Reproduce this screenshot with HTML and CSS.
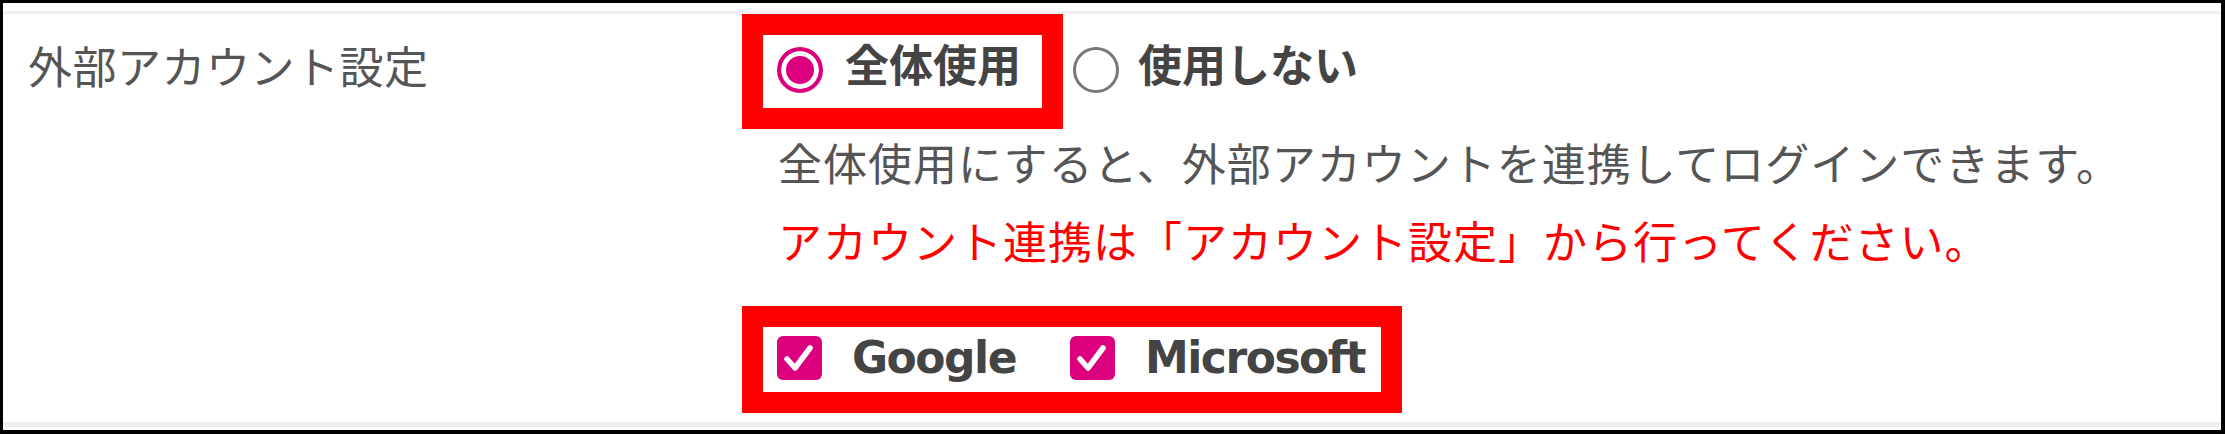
FILE: index.html
```html
<!DOCTYPE html>
<html lang="ja">
<head>
  <meta charset="UTF-8">
  <title>外部アカウント設定</title>
  <link rel="stylesheet" href="styles.css">
</head>
<body>
  <div class="frame">
    <div class="row">
      <div class="row-label">外部アカウント設定</div>
      <div class="row-body">
        <!-- 使用設定 -->
        <div class="radio-line">
          <div class="mark mark-radio">
            <label class="radio">
              <span class="radio-dot checked"></span>
              <span class="radio-text">全体使用</span>
            </label>
          </div>
          <label class="radio radio-off">
            <span class="radio-dot"></span>
            <span class="radio-text">使用しない</span>
          </label>
        </div>

        <p class="note">全体使用にすると、外部アカウントを連携してログインできます。</p>
        <p class="note warn">アカウント連携は「アカウント設定」から行ってください。</p>

        <!-- 連携先 -->
        <div class="mark mark-check">
          <label class="check">
            <span class="check-box">
              <svg viewBox="0 0 44 44" width="44" height="44"><polyline points="10,23 18,32 33,12" fill="none" stroke="#fff" stroke-width="5.5" stroke-linecap="round" stroke-linejoin="round"/></svg>
            </span>
            <span class="check-text">Google</span>
          </label>
          <label class="check">
            <span class="check-box">
              <svg viewBox="0 0 44 44" width="44" height="44"><polyline points="10,23 18,32 33,12" fill="none" stroke="#fff" stroke-width="5.5" stroke-linecap="round" stroke-linejoin="round"/></svg>
            </span>
            <span class="check-text">Microsoft</span>
          </label>
        </div>
      </div>
    </div>
  </div>
</body>
</html>
```

FILE: styles.css
```css
/* Reset */
* {
  margin: 0;
  padding: 0;
  box-sizing: border-box;
}

body {
  font-family: "Noto Sans CJK JP", sans-serif;
  background-color: #fff;
  color: #555;
}

.frame {
  width: 2225px;
  height: 434px;
  border: solid #000;
  border-width: 3px 4px 4px 3px;
  padding: 8px 0 3px;
}

.row {
  display: flex;
  height: 100%;
  border-top: 3px solid #eef0f4;
  border-bottom: 5px solid #eef0f4;
}

.row-label {
  flex-shrink: 0;
  width: 739px;
  padding: 21px 0 0 25px;
  font-size: 44px;
  line-height: 60px;
  letter-spacing: 0.5px;
  color: #555;
}

.row-body {
  display: flex;
  flex-direction: column;
  align-items: flex-start;
}

/* red frames */
.mark {
  border: 21px solid #f00;
}

.radio-line {
  display: flex;
  align-items: flex-start;
}

.mark-radio {
  padding: 5px 21px 15px 14px;
}

.radio {
  display: flex;
  align-items: flex-start;
  gap: 22px;
}

.radio-off {
  margin: 26px 0 0 10px;
  gap: 19px;
}

.radio-dot {
  width: 46px;
  height: 46px;
  margin-top: 7px;
  border-radius: 50%;
  border: 3px solid #777;
  background-color: #fff;
}

.radio-dot.checked {
  border: 4px solid #dc007f;
  background-color: #dc007f;
  box-shadow: inset 0 0 0 5px #fff;
}

.radio-text {
  font-size: 44px;
  line-height: 46px;
  font-weight: bold;
  color: #444;
}

.note {
  margin: 3px 0 0 36px;
  font-size: 44px;
  line-height: 60px;
  letter-spacing: 1px;
  color: #555;
}

.note.warn {
  margin-top: 18px;
  color: #f00;
}

.mark-check {
  display: flex;
  align-items: center;
  gap: 54px;
  height: 107px;
  margin-top: 36px;
  padding: 0 16px 3px 14px;
}

.check {
  display: flex;
  align-items: center;
  gap: 30px;
}

.check-box {
  display: flex;
  width: 45px;
  height: 44px;
  border-radius: 6px;
  background-color: #dc007f;
}

.check-text {
  font-family: "DejaVu Sans", sans-serif;
  font-size: 44px;
  font-weight: bold;
  line-height: 1;
  letter-spacing: -1.5px;
  color: #444;
}
```
